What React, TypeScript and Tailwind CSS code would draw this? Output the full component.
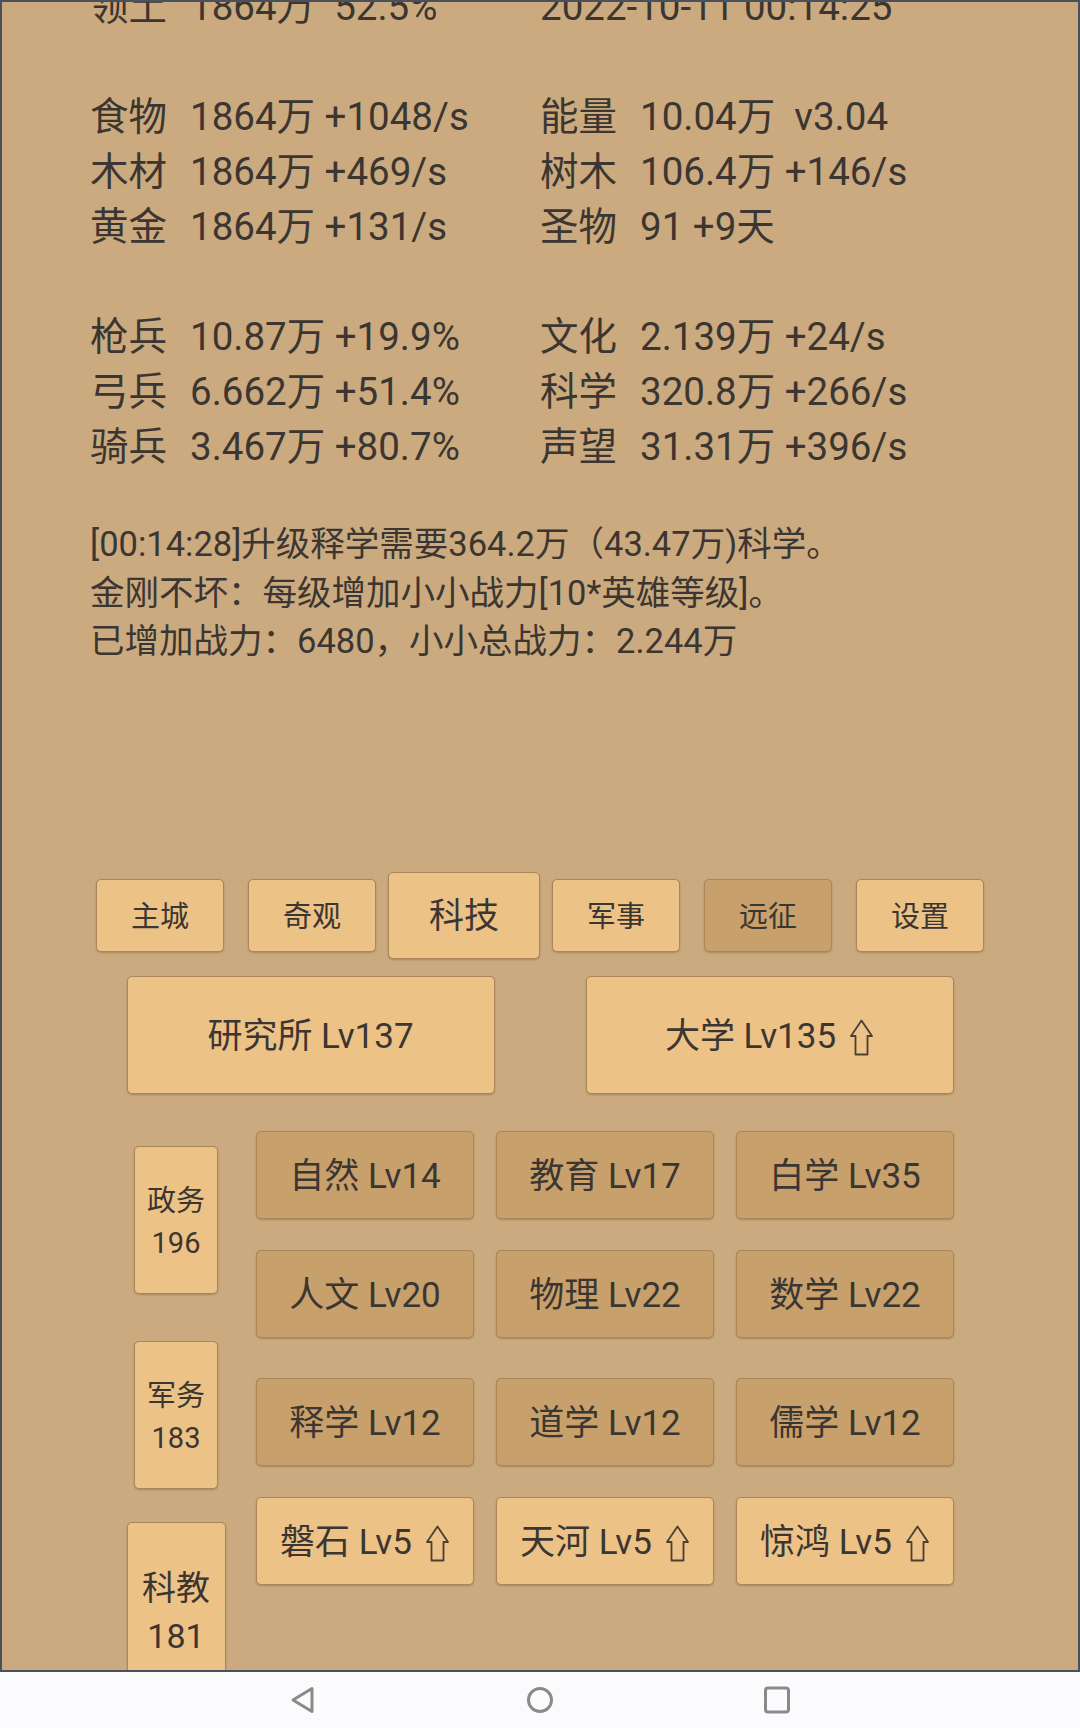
import React from 'react';

const font = { fontFamily: 'Roboto, "Noto Sans CJK SC", sans-serif' };

const UpArrow = () => (
  <svg width="25" height="37" viewBox="0 0 25 37" className="ml-[13px] inline-block">
    <path d="M12.5 1.5 L23 17 L18.5 17 L18.5 35.5 L6.5 35.5 L6.5 17 L2 17 Z" fill="none" stroke="#4a3f33" strokeWidth="1.8" strokeLinejoin="round" />
  </svg>
);

const statRows: [string, string, string, string][] = [
  ['食物', '1864万 +1048/s', '能量', '10.04万  v3.04'],
  ['木材', '1864万 +469/s', '树木', '106.4万 +146/s'],
  ['黄金', '1864万 +131/s', '圣物', '91 +9天'],
];

const armyRows: [string, string, string, string][] = [
  ['枪兵', '10.87万 +19.9%', '文化', '2.139万 +24/s'],
  ['弓兵', '6.662万 +51.4%', '科学', '320.8万 +266/s'],
  ['骑兵', '3.467万 +80.7%', '声望', '31.31万 +396/s'],
];

const StatRow = ({ row }: { row: [string, string, string, string] }) => (
  <div className="flex h-[55px] items-center whitespace-pre">
    <div className="flex w-[450px]">
      <span className="w-[100px]">{row[0]}</span>
      <span>{row[1]}</span>
    </div>
    <div className="flex">
      <span className="w-[100px]">{row[2]}</span>
      <span>{row[3]}</span>
    </div>
  </div>
);

const tabs = ['主城', '奇观', '科技', '军事', '远征', '设置'];

const techRows = [
  ['自然 Lv14', '教育 Lv17', '白学 Lv35'],
  ['人文 Lv20', '物理 Lv22', '数学 Lv22'],
];
const upgrades = ['磐石 Lv5', '天河 Lv5', '惊鸿 Lv5'];

const light = 'pt-[5px] bg-[#ecc287] border-[1.5px] border-[#a8865a] rounded-[5px] shadow-[0_1px_2px_rgba(60,40,20,0.25)]';
const dark = 'pt-[5px] bg-[#c8a06c] border-[1.5px] border-[#a8865a] rounded-[5px] shadow-[0_1px_2px_rgba(60,40,20,0.25)]';

const TechButton = ({ label, up }: { label: string; up?: boolean }) => (
  <div className={`flex h-[88px] w-[218px] items-center justify-center text-[35px] ${up ? light : dark}`}>
    <span>{label}</span>
    {up && <UpArrow />}
  </div>
);

export default function App() {
  return (
    <div className="flex h-[1728px] w-[1080px] flex-col bg-[#fbfbfd] text-[#3b3631]" style={font}>
      <div className="relative h-[1672px] overflow-hidden border-2 border-[#4b505c] bg-[#cbaa7f]">
        {/* resource listing */}
        <div className="-mt-[23px] pl-[88px] text-[38.5px]">
          <div className="flex h-[55px] items-center whitespace-pre">
            <div className="flex w-[450px]">
              <span className="w-[100px]">领土</span>
              <span>1864万  52.5%</span>
            </div>
            <span>2022-10-11 00:14:25</span>
          </div>
          <div className="h-[55px]" />
          {statRows.map((r) => (
            <StatRow key={r[0]} row={r} />
          ))}
          <div className="h-[55px]" />
          {armyRows.map((r) => (
            <StatRow key={r[0]} row={r} />
          ))}
        </div>

        {/* log */}
        <div className="mt-[46px] pl-[88px] text-[34.5px] leading-[48.5px]">
          <div>[00:14:28]升级释学需要364.2万（43.47万)科学。</div>
          <div>金刚不坏：每级增加小小战力[10*英雄等级]。</div>
          <div>已增加战力：6480，小小总战力：2.244万</div>
        </div>

        {/* tabs */}
        <div className="mt-[206px] flex h-[87px] items-center justify-center gap-6">
          {tabs.map((t) =>
            t === '科技' ? (
              <div key={t} className={`-mx-3 flex h-[87px] w-[152px] items-center justify-center text-[35px] ${light}`}>
                {t}
              </div>
            ) : (
              <div
                key={t}
                className={`flex h-[73px] w-[128px] items-center justify-center text-[29px] ${t === '远征' ? dark : light}`}
              >
                {t}
              </div>
            ),
          )}
        </div>

        {/* buildings */}
        <div className="mt-[17px] flex justify-center gap-[91px]">
          <div className={`flex h-[118px] w-[368px] items-center justify-center text-[35px] ${light}`}>研究所 Lv137</div>
          <div className={`flex h-[118px] w-[368px] items-center justify-center text-[35px] ${light}`}>
            <span>大学 Lv135</span>
            <UpArrow />
          </div>
        </div>

        {/* tech section */}
        <div className="mt-[37px] flex justify-center gap-[30px]">
          <div className="flex w-[100px] flex-col items-center pt-[15px]">
            <div className={`flex h-[148px] w-[84px] flex-col items-center justify-center text-[29px] leading-[42px] ${light}`}>
              <span>政务</span>
              <span>196</span>
            </div>
            <div className={`mt-[47px] flex h-[148px] w-[84px] flex-col items-center justify-center text-[29px] leading-[42px] ${light}`}>
              <span>军务</span>
              <span>183</span>
            </div>
            <div className={`mt-[33px] flex h-[175px] w-[99px] shrink-0 flex-col items-center justify-center text-[34px] leading-[48px] ${light}`}>
              <span>科教</span>
              <span>181</span>
            </div>
          </div>

          <div className="flex w-[698px] flex-col gap-[40px]">
            <div className="flex flex-col gap-[31px]">
              {techRows.map((row, i) => (
                <div key={i} className="flex gap-[22px]">
                  {row.map((l) => (
                    <TechButton key={l} label={l} />
                  ))}
                </div>
              ))}
            </div>
            <div className="flex flex-col gap-[31px]">
              <div className="flex gap-[22px]">
                {['释学 Lv12', '道学 Lv12', '儒学 Lv12'].map((l) => (
                  <TechButton key={l} label={l} />
                ))}
              </div>
              <div className="flex gap-[22px]">
                {upgrades.map((l) => (
                  <TechButton key={l} label={l} up />
                ))}
              </div>
            </div>
          </div>
        </div>
      </div>

      {/* system navigation bar */}
      <div className="flex h-[56px] items-center justify-center gap-[211px] bg-[#fbfbfd]">
        <svg width="26" height="28" viewBox="0 0 26 28">
          <path d="M22 2.5 L3 14 L22 25.5 Z" fill="none" stroke="#8a8a8a" strokeWidth="3" strokeLinejoin="round" />
        </svg>
        <svg width="26" height="28" viewBox="0 0 26 28">
          <circle cx="13" cy="14" r="11.5" fill="none" stroke="#8a8a8a" strokeWidth="3" />
        </svg>
        <svg width="26" height="28" viewBox="0 0 26 28">
          <rect x="1.5" y="2" width="23" height="24" rx="2.5" fill="none" stroke="#8a8a8a" strokeWidth="3" />
        </svg>
      </div>
    </div>
  );
}
